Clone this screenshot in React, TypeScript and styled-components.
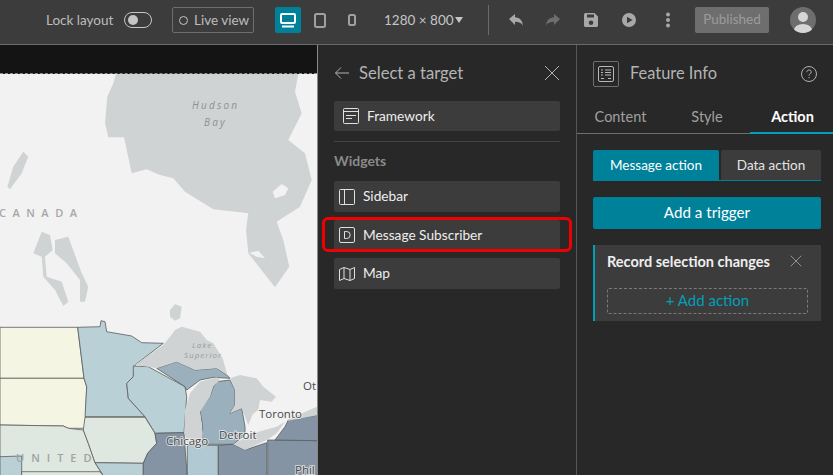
import React from 'react';
import styled, { createGlobalStyle } from 'styled-components';

const GlobalStyle = createGlobalStyle`
  html, body {
    margin: 0;
    padding: 0;
    background: #282828;
    overflow: hidden;
  }
  * {
    box-sizing: border-box;
  }
`;

const Page = styled.div`
  width: 833px;
  height: 475px;
  display: flex;
  flex-direction: column;
  font-family: Lato, 'Open Sans', sans-serif;
  color: #c5c5c5;
  overflow: hidden;
`;

const TopBar = styled.header`
  height: 45px;
  flex: none;
  display: flex;
  align-items: center;
  padding: 0 0 4px 46px;
  background: #3c3c3c;
  border-bottom: 1px solid #6a6a6a;
`;

const LockLabel = styled.span`
  width: 78px;
  margin-bottom: 1px;
  font-size: 13.5px;
  color: #bdbdbd;
`;

const Toggle = styled.span`
  width: 28px;
  height: 16px;
  padding: 2px 3px;
  border: 1px solid #c5c5c5;
  border-radius: 8px;
  margin-right: 20px;
  &::before {
    content: '';
    display: block;
    width: 10px;
    height: 10px;
    border-radius: 50%;
    background: #c5c5c5;
  }
`;

const LiveButton = styled.button`
  width: 82px;
  height: 26px;
  display: flex;
  align-items: center;
  gap: 6px;
  padding: 0 0 0 6px;
  margin-right: 21px;
  background: transparent;
  border: 1px solid #6e6e6e;
  border-radius: 2px;
  color: #bdbdbd;
  font: 13.5px Lato, sans-serif;
  &::before {
    content: '';
    width: 7px;
    height: 7px;
    border: 1px solid #c5c5c5;
    border-radius: 50%;
  }
`;

const DeviceButton = styled.span<{ $active?: boolean; $width: number }>`
  width: ${({ $width }) => $width}px;
  height: 26px;
  display: flex;
  align-items: center;
  justify-content: center;
  border-radius: 2px;
  background: ${({ $active }) => ($active ? '#00819a' : 'transparent')};
  color: ${({ $active }) => ($active ? '#ffffff' : '#a0a0a0')};
`;

const SizeLabel = styled.span`
  display: flex;
  align-items: center;
  gap: 1px;
  width: 124px;
  padding-left: 20px;
  font-size: 13.5px;
  color: #c5c5c5;
  white-space: nowrap;
`;

const Caret = styled.span`
  width: 0;
  height: 0;
  border-left: 4px solid transparent;
  border-right: 4px solid transparent;
  border-top: 6px solid #c5c5c5;
`;

const BarDivider = styled.span`
  width: 1px;
  height: 30px;
  background: #6a6a6a;
  margin-right: 19px;
`;

const ToolIcon = styled.span<{ $dim?: boolean; $gap: number }>`
  width: 16px;
  height: 16px;
  display: flex;
  margin-right: ${({ $gap }) => $gap}px;
  color: ${({ $dim }) => ($dim ? '#6e6e6e' : '#a8a8a8')};
`;

const PublishedButton = styled.span`
  width: 74px;
  height: 26px;
  display: flex;
  align-items: center;
  justify-content: center;
  padding-bottom: 2px;
  background: #6e6e6e;
  border-radius: 2px;
  color: #9c9c9c;
  font-size: 13.5px;
  margin-right: 21px;
`;

const Avatar = styled.svg`
  width: 26px;
  height: 26px;
`;

const Workspace = styled.main`
  flex: 1;
  min-height: 0;
  display: grid;
  grid-template-columns: 318px 259px 256px;
`;

const Canvas = styled.section`
  display: flex;
  flex-direction: column;
  border-right: 1px solid #8a8a8a;
  background: #141414;
  min-height: 0;
`;

const CanvasBand = styled.div`
  height: 29px;
  flex: none;
  background: #141414;
  border-bottom: 1px dashed #8f8f8f;
`;

const MapSvg = styled.svg`
  display: block;
  width: 317px;
  height: 401px;
  background: #f2f2f2;
`;

const TargetPanel = styled.section`
  padding: 0 16px;
  background: #282828;
  border-right: 1px solid #555555;
`;

const PanelHeader = styled.div`
  height: 56px;
  display: flex;
  align-items: center;
  color: #c0c0c0;
`;

const PanelTitle = styled.h2`
  flex: 1;
  margin: 0 0 1px 9px;
  font-size: 16.6px;
  font-weight: 400;
  color: #b4b4b4;
`;

const TargetCard = styled.div<{ $indent?: boolean; $height: number; $highlight?: boolean }>`
  position: relative;
  height: ${({ $height }) => $height}px;
  display: flex;
  align-items: center;
  gap: 8px;
  padding-left: ${({ $indent }) => ($indent ? 9 : 5)}px;
  background: #3c3c3c;
  border-radius: 2px;
  ${({ $highlight }) =>
    $highlight &&
    `
    &::after {
      content: '';
      position: absolute;
      left: -12px;
      right: -12px;
      top: -3px;
      bottom: -2px;
      border: 3px solid #f00000;
      border-radius: 6px;
    }
  `}
`;

const CardLabel = styled.span`
  margin-bottom: 2px;
  font-size: 13.7px;
  color: #eeeeee;
`;

const CardIcon = styled.svg`
  width: 16px;
  height: 16px;
  flex: none;
  color: #e0e0e0;
`;

const PanelRule = styled.hr`
  margin: 10px 0 0;
  border: 0;
  border-top: 1px solid #444444;
`;

const SectionLabel = styled.h3`
  margin: 10px 0 12px;
  font-size: 14px;
  line-height: 17px;
  font-weight: 700;
  color: #8a8a8a;
`;

const CardStack = styled.div`
  display: flex;
  flex-direction: column;
  gap: 8px;
`;

const SettingsPanel = styled.section`
  background: #282828;
`;

const WidgetHeader = styled.div`
  height: 58px;
  display: flex;
  align-items: center;
  padding: 0 16px;
  color: #b8b8b8;
`;

const WidgetIconBox = styled.span`
  width: 26px;
  height: 26px;
  display: flex;
  align-items: center;
  justify-content: center;
  border: 1px solid #6e6e6e;
  border-radius: 2px;
`;

const WidgetTitle = styled.h2`
  flex: 1;
  margin: 0 0 3px 11px;
  font-size: 16.4px;
  font-weight: 400;
  color: #b4b4b4;
`;

const Tabs = styled.nav`
  height: 31px;
  display: grid;
  grid-template-columns: 87px 86px 83px;
  border-bottom: 1px solid #6e6e6e;
`;

const Tab = styled.span<{ $active?: boolean }>`
  display: flex;
  align-items: center;
  justify-content: center;
  height: 31px;
  padding-bottom: ${({ $active }) => ($active ? '3px' : '5px')};
  padding-left: ${({ $active }) => ($active ? '2px' : '0')};
  font-size: 14.5px;
  font-weight: ${({ $active }) => ($active ? 700 : 400)};
  color: ${({ $active }) => ($active ? '#ffffff' : '#a0a0a0')};
  border-bottom: ${({ $active }) => ($active ? '2px solid #00a0b8' : '0')};
`;

const SettingsBody = styled.div`
  padding: 16px 12px 0 16px;
  display: flex;
  flex-direction: column;
  gap: 16px;
`;

const Segments = styled.div`
  display: grid;
  grid-template-columns: 126px 100px;
  gap: 2px;
  height: 31px;
  border-bottom: 1px solid #00819a;
`;

const Segment = styled.span<{ $active?: boolean }>`
  display: flex;
  align-items: center;
  justify-content: center;
  padding-bottom: 1px;
  border-radius: 2px 2px 0 0;
  font-size: 13.5px;
  background: ${({ $active }) => ($active ? '#00819a' : '#3c3c3c')};
  color: ${({ $active }) => ($active ? '#ffffff' : '#e4e4e4')};
`;

const TriggerButton = styled.button`
  height: 32px;
  padding: 0 0 2px;
  border: 0;
  border-radius: 2px;
  background: #00819a;
  color: #ffffff;
  font: 15.2px Lato, sans-serif;
`;

const TriggerCard = styled.div`
  height: 76px;
  padding: 6px 13px 7px 12px;
  background: #3c3c3c;
  border-left: 2px solid #00a0b8;
`;

const TriggerHead = styled.div`
  display: flex;
  align-items: center;
  justify-content: space-between;
  height: 20px;
  padding-right: 6px;
  margin-bottom: 17px;
  font-size: 14.5px;
  font-weight: 700;
  color: #eeeeee;
`;

const AddAction = styled.div`
  height: 26px;
  display: flex;
  align-items: center;
  justify-content: center;
  padding-bottom: 3px;
  border: 1px dashed #7a7a7a;
  border-radius: 2px;
  color: #00a0b8;
  font-size: 15px;
`;

const MapLabel = styled.text<{ $italic?: boolean; $size: number; $spacing: number; $fill: string }>`
  font-family: 'Open Sans', sans-serif;
  font-size: ${({ $size }) => $size}px;
  letter-spacing: ${({ $spacing }) => $spacing}px;
  fill: ${({ $fill }) => $fill};
  font-style: ${({ $italic }) => ($italic ? 'italic' : 'normal')};
  font-weight: ${({ $italic }) => ($italic ? 400 : 600)};
`;

const CityLabel = styled.text`
  font-family: 'Open Sans', sans-serif;
  font-size: 11.5px;
  fill: #4a4a4a;
  stroke: #f2f2f2;
  stroke-width: 2px;
  stroke-opacity: 0.7;
  paint-order: stroke;
`;

// reference coordinates were read from a 3x crop, hence the helper
const pts = (originY: number, list: number[][]) =>
  list.map(([x, y]) => `${(x / 3).toFixed(1)},${(originY + y / 3).toFixed(1)}`).join(' ');

const LAKE = '#d0d3d4';

const hudson = pts(60, [
  [348, 42], [340, 70], [322, 110], [315, 190], [325, 232], [372, 232], [395, 340], [440, 328], [480, 345], [520, 355],
  [555, 395], [640, 448], [745, 460], [738, 510], [745, 580], [800, 650], [825, 682], [868, 620],
  [850, 540], [830, 485], [900, 440], [935, 360], [915, 280], [865, 240], [905, 160], [885, 95], [895, 42],
]);
const jamesHole = pts(60, [[748, 578], [775, 572], [795, 595], [770, 590]]);
const belcher = pts(60, [[818, 395], [845, 372], [865, 385], [855, 405], [825, 415]]);
const baffin = pts(60, [[70, 275], [85, 290], [65, 340], [30, 388], [22, 380], [40, 320]]);
const winnipeg = pts(60, [[165, 540], [205, 530], [245, 640], [265, 680], [255, 725], [240, 725], [240, 660], [200, 610], [165, 580]]);
const manitoba = pts(60, [[125, 515], [150, 525], [158, 570], [135, 590], [140, 650], [185, 665], [205, 725], [190, 738], [165, 690], [130, 650], [125, 590], [100, 580]]);

const states: { fill: string; points: number[][] }[] = [
  { fill: '#f5f5e3', points: [[0, 82], [233, 82], [252, 235], [0, 235]] },
  { fill: '#f5f5e3', points: [[0, 235], [252, 235], [260, 260], [255, 385], [205, 385], [190, 378], [0, 375]] },
  { fill: '#dee7e0', points: [[0, 375], [190, 378], [205, 385], [250, 390], [265, 430], [285, 488], [312, 530], [0, 530]] },
  { fill: '#b9d0d6', points: [[0, 470], [65, 468], [65, 530], [0, 530]] },
  { fill: '#dee7e0', points: [[65, 515], [300, 515], [312, 530], [65, 530]] },
  { fill: '#b9d0d6', points: [[233, 82], [300, 80], [303, 62], [315, 65], [320, 95], [395, 108], [425, 128], [490, 130], [405, 195], [400, 230], [380, 250], [385, 295], [435, 350], [255, 350], [260, 260], [252, 235]] },
  { fill: '#b9d0d6', points: [[400, 198], [445, 200], [555, 260], [560, 290], [552, 398], [465, 400], [435, 350], [385, 295], [380, 250], [400, 230]] },
  { fill: '#dee7e0', points: [[255, 352], [435, 352], [465, 400], [470, 430], [443, 460], [430, 490], [285, 488], [265, 430], [250, 390]] },
  { fill: '#b9d0d6', points: [[285, 488], [430, 490], [430, 530], [312, 530]] },
  { fill: '#9ab0bc', points: [[470, 205], [530, 185], [585, 210], [650, 205], [680, 225], [690, 235], [640, 232], [600, 240], [560, 270], [555, 260]] },
  { fill: '#9ab0bc', points: [[650, 245], [690, 240], [705, 270], [705, 315], [690, 340], [725, 325], [735, 380], [735, 405], [700, 433], [605, 433], [608, 380], [600, 330], [630, 290], [640, 260]] },
  { fill: '#8494a5', points: [[465, 400], [552, 398], [555, 440], [562, 530], [430, 530], [430, 490], [443, 460], [470, 430]] },
  { fill: '#b0c9d2', points: [[562, 436], [655, 436], [655, 530], [562, 530]] },
  { fill: '#8494a5', points: [[655, 436], [700, 433], [735, 450], [800, 428], [800, 530], [655, 530]] },
  { fill: '#8494a5', points: [[803, 420], [955, 422], [955, 530], [803, 530]] },
  { fill: '#8494a5', points: [[825, 420], [855, 380], [865, 360], [955, 345], [955, 422]] },
];

const lakes = [
  [[405, 195], [490, 135], [510, 110], [525, 90], [545, 80], [600, 95], [620, 120], [640, 130], [668, 175], [682, 225], [650, 205], [585, 210], [530, 185], [470, 205], [445, 200]],
  [[553, 400], [555, 330], [570, 280], [600, 245], [650, 232], [660, 240], [640, 258], [630, 290], [600, 335], [608, 400], [605, 435], [565, 435]],
  [[690, 235], [720, 225], [770, 235], [790, 260], [828, 290], [815, 305], [780, 300], [775, 330], [758, 342], [745, 375], [725, 325], [690, 340], [705, 315], [705, 270]],
  [[700, 433], [760, 400], [830, 380], [855, 365], [830, 400], [800, 420], [735, 450]],
  [[860, 360], [950, 320], [955, 345], [865, 362]],
  [[510, 30], [525, 12], [545, 20], [540, 55], [525, 62], [510, 50]],
];

const GeoMap = () => (
  <MapSvg viewBox="0 74 317 401">
    <polygon points={hudson} fill={LAKE} />
    <polygon points={jamesHole} fill="#f2f2f2" />
    <polygon points={belcher} fill="#f2f2f2" />
    <polygon points={baffin} fill={LAKE} />
    <polygon points={winnipeg} fill={LAKE} />
    <polygon points={manitoba} fill={LAKE} />
    {states.map((state, i) => (
      <polygon key={i} points={pts(300, state.points)} fill={state.fill} stroke="#5c5c5c" strokeWidth="0.8" strokeLinejoin="round" />
    ))}
    {lakes.map((lake, i) => (
      <polygon key={i} points={pts(300, lake)} fill={LAKE} />
    ))}
    <MapLabel x="192" y="109" $italic $size={10} $spacing={2.2} $fill="#8e9192">Hudson</MapLabel>
    <MapLabel x="204" y="126" $italic $size={10} $spacing={2.2} $fill="#8e9192">Bay</MapLabel>
    <MapLabel x="-1" y="217" $size={11} $spacing={6.5} $fill="#a6a8a8">CANADA</MapLabel>
    <MapLabel x="192" y="348" $italic $size={8} $spacing={1} $fill="#9a9c9d">Lake</MapLabel>
    <MapLabel x="184" y="358" $italic $size={8} $spacing={1} $fill="#9a9c9d">Superior</MapLabel>
    <MapLabel x="16" y="462" $size={11} $spacing={7} $fill="#a0a4a6">UNITED</MapLabel>
    <CityLabel x="166" y="445">Chicago</CityLabel>
    <CityLabel x="219" y="439">Detroit</CityLabel>
    <CityLabel x="259" y="418">Toronto</CityLabel>
    <CityLabel x="303" y="390">Ot</CityLabel>
    <CityLabel x="295" y="474">Phil</CityLabel>
  </MapSvg>
);

const CloseIcon = ({ size }: { size: number }) => (
  <svg width={size} height={size} viewBox="0 0 16 16" fill="none" stroke="#b0b0b0" strokeWidth="1">
    <path d="M1 1l14 14M15 1L1 15" />
  </svg>
);

export default function App() {
  return (
    <Page>
      <GlobalStyle />
      <TopBar>
        <LockLabel>Lock layout</LockLabel>
        <Toggle />
        <LiveButton>Live view</LiveButton>
        <DeviceButton $active $width={26}>
          <svg width="18" height="16" viewBox="0 0 18 16" fill="none" stroke="currentColor" strokeWidth="2">
            <rect x="2" y="2" width="14" height="9" rx="1" />
            <path d="M3 14.500h12" />
          </svg>
        </DeviceButton>
        <DeviceButton $width={38}>
          <svg width="12" height="15" viewBox="0 0 12 15" fill="none" stroke="currentColor" strokeWidth="2">
            <rect x="1" y="1" width="10" height="13" rx="1.500" />
          </svg>
        </DeviceButton>
        <DeviceButton $width={25}>
          <svg width="8" height="12" viewBox="0 0 8 12" fill="none" stroke="currentColor" strokeWidth="2">
            <rect x="1" y="1" width="6" height="10" rx="1.500" />
          </svg>
        </DeviceButton>
        <SizeLabel>
          1280 × 800
          <Caret />
        </SizeLabel>
        <BarDivider />
        <ToolIcon $gap={21}>
          <svg viewBox="0 0 16 16" fill="currentColor">
            <path d="M1 7l6-5v3.200c4.500.3 7.500 3 8 8.300-1.500-2.600-4-3.800-8-3.800V13z" />
          </svg>
        </ToolIcon>
        <ToolIcon $dim $gap={22}>
          <svg viewBox="0 0 16 16" fill="currentColor">
            <path d="M15 7L9 2v3.200C4.500 5.500 1.500 8.200 1 13.500c1.500-2.600 4-3.800 8-3.800V13z" />
          </svg>
        </ToolIcon>
        <ToolIcon $gap={22}>
          <svg viewBox="0 0 16 16" fill="currentColor">
            <path d="M2.500 1h9L15 4.500V13.500a1.500 1.500 0 0 1-1.500 1.500h-11A1.500 1.500 0 0 1 1 13.500v-11A1.500 1.500 0 0 1 2.500 1zM4 2.500v3h7v-3zM8 8.500a2.300 2.300 0 1 0 0 4.600 2.300 2.300 0 0 0 0-4.600z" fillRule="evenodd" />
          </svg>
        </ToolIcon>
        <ToolIcon $gap={23}>
          <svg viewBox="0 0 16 16" fill="currentColor">
            <path d="M8 1a7 7 0 1 1 0 14A7 7 0 0 1 8 1zM6 4.800v6.400L11.500 8z" fillRule="evenodd" />
          </svg>
        </ToolIcon>
        <ToolIcon $gap={19}>
          <svg viewBox="0 0 16 16" fill="currentColor">
            <circle cx="8" cy="2.500" r="2" />
            <circle cx="8" cy="8" r="2" />
            <circle cx="8" cy="13.500" r="2" />
          </svg>
        </ToolIcon>
        <PublishedButton>Published</PublishedButton>
        <Avatar viewBox="0 0 26 26">
          <defs>
            <clipPath id="avatar-clip">
              <circle cx="13" cy="13" r="13" />
            </clipPath>
          </defs>
          <circle cx="13" cy="13" r="13" fill="#6e6e6e" />
          <g clipPath="url(#avatar-clip)" fill="#d6d6d6">
            <circle cx="13" cy="10" r="5" />
            <ellipse cx="13" cy="23" rx="9" ry="6" />
          </g>
        </Avatar>
      </TopBar>
      <Workspace>
        <Canvas>
          <CanvasBand />
          <GeoMap />
        </Canvas>
        <TargetPanel>
          <PanelHeader>
            <svg width="16" height="14" viewBox="0 0 16 14" fill="none" stroke="#b0b0b0" strokeWidth="1">
              <path d="M15 7H1.500M7 1.500L1.500 7 7 12.500" />
            </svg>
            <PanelTitle>Select a target</PanelTitle>
            <CloseIcon size={16} />
          </PanelHeader>
          <TargetCard $indent $height={30}>
            <CardIcon viewBox="0 0 16 16" fill="none" stroke="currentColor" strokeWidth="1">
              <rect x="0.500" y="0.500" width="15" height="15" rx="1" />
              <path d="M1 3.500h14M3 7.500h10M3 10.500h6" />
            </CardIcon>
            <CardLabel>Framework</CardLabel>
          </TargetCard>
          <PanelRule />
          <SectionLabel>Widgets</SectionLabel>
          <CardStack>
            <TargetCard $height={31}>
              <CardIcon viewBox="0 0 16 16" fill="none" stroke="currentColor" strokeWidth="1">
                <rect x="0.500" y="0.500" width="15" height="15" rx="1" />
                <path d="M5.500 1v14" />
              </CardIcon>
              <CardLabel>Sidebar</CardLabel>
            </TargetCard>
            <TargetCard $height={30} $highlight>
              <CardIcon viewBox="0 0 16 16" fill="none" stroke="currentColor" strokeWidth="1">
                <rect x="0.500" y="0.500" width="15" height="15" rx="1.500" />
                <path d="M5.500 4.500v7h2.200a3.500 3.500 0 0 0 0-7z" />
              </CardIcon>
              <CardLabel>Message Subscriber</CardLabel>
            </TargetCard>
            <TargetCard $height={31}>
              <CardIcon viewBox="0 0 16 16" fill="none" stroke="currentColor" strokeWidth="1">
                <path d="M0.500 3.500L5 1.500l6 2 4.500-2v11l-4.500 2-6-2-4.500 2zM5 1.500v11M11 3.500v11" />
              </CardIcon>
              <CardLabel>Map</CardLabel>
            </TargetCard>
          </CardStack>
        </TargetPanel>
        <SettingsPanel>
          <WidgetHeader>
            <WidgetIconBox>
              <svg width="16" height="16" viewBox="0 0 16 16" fill="none" stroke="#b8b8b8" strokeWidth="1">
                <rect x="0.500" y="0.500" width="15" height="15" rx="1.500" />
                <path d="M3 4h2M7 4h6M3 6.500h2M7 6.500h6M3 9h2M7 9h6M3 12.500h3M10 12.500h3" />
              </svg>
            </WidgetIconBox>
            <WidgetTitle>Feature Info</WidgetTitle>
            <svg width="16" height="16" viewBox="0 0 16 16" fill="none" stroke="#b0b0b0" strokeWidth="1">
              <circle cx="8" cy="8" r="7.500" />
              <path d="M5.800 6.200c0-1.300 1-2.200 2.300-2.200s2.200.9 2.200 2c0 1.800-2.300 1.700-2.300 3.700" />
              <path d="M8 11v1.200" />
            </svg>
          </WidgetHeader>
          <Tabs>
            <Tab>Content</Tab>
            <Tab>Style</Tab>
            <Tab $active>Action</Tab>
          </Tabs>
          <SettingsBody>
            <Segments>
              <Segment $active>Message action</Segment>
              <Segment>Data action</Segment>
            </Segments>
            <TriggerButton>Add a trigger</TriggerButton>
            <TriggerCard>
              <TriggerHead>
                Record selection changes
                <CloseIcon size={12} />
              </TriggerHead>
              <AddAction>+ Add action</AddAction>
            </TriggerCard>
          </SettingsBody>
        </SettingsPanel>
      </Workspace>
    </Page>
  );
}
